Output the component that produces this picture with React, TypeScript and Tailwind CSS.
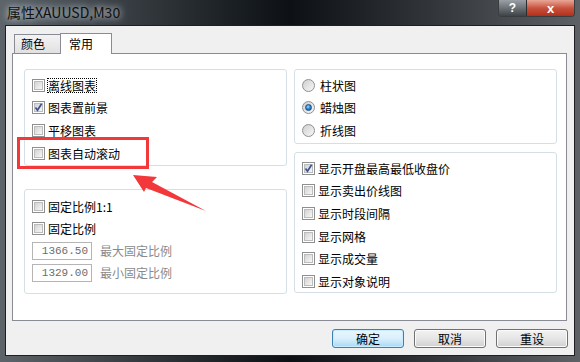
import React from "react";

const font = "font-['Noto_Sans_CJK_SC','Microsoft_YaHei',sans-serif]";

function CheckBox({ checked }: { checked?: boolean }) {
  return (
    <span className="relative block h-[13px] w-[13px] shrink-0 border border-[#8e8f8f] bg-white p-[1px]">
      <span className="block h-full w-full border border-[#bcbcbc] bg-linear-to-br from-[#d3d3d3] to-[#f7f7f7]" />
      {checked && (
        <svg className="absolute left-0 top-0" width="11" height="11" viewBox="0 0 11 11">
          <path d="M2.5 5.5 L4.5 8.3 L8.6 1.8" fill="none" stroke="#3d5391" strokeWidth="1.7" />
        </svg>
      )}
    </span>
  );
}

function Radio({ checked }: { checked?: boolean }) {
  return (
    <span className="flex h-[13px] w-[13px] shrink-0 items-center justify-center rounded-full border border-[#8e8f8f] bg-linear-to-br from-[#cfcfcf] to-[#f8f8f8]">
      {checked && (
        <span className="block h-[7px] w-[7px] rounded-full border border-[#1d4f86] bg-[radial-gradient(circle_at_40%_35%,#9fdcff_0%,#2a8ad8_45%,#0c4a8f_100%)]" />
      )}
    </span>
  );
}

function CheckRow({ label, checked, focus }: { label: string; checked?: boolean; focus?: boolean }) {
  return (
    <div className="flex h-[22.6px] items-center gap-[3px] pl-[7px]">
      <CheckBox checked={checked} />
      <span className={`leading-[13px] ${focus ? "outline-1 outline-dotted outline-black" : ""}`}>{label}</span>
    </div>
  );
}

function RadioRow({ label, checked }: { label: string; checked?: boolean }) {
  return (
    <div className="flex h-[22.6px] items-center gap-[5px] pl-[7px]">
      <Radio checked={checked} />
      <span className="leading-[13px]">{label}</span>
    </div>
  );
}

function Group({ className, children }: { className: string; children: React.ReactNode }) {
  return (
    <div className={`rounded-[3px] border border-[#d5dfe5] bg-white ${className}`}>{children}</div>
  );
}

function NumRow({ value, label }: { value: string; label: string }) {
  return (
    <div className="flex h-[22px] items-center gap-[8px] pl-[7px]">
      <div className="flex h-[18px] w-[60px] items-center justify-end border border-[#b5b5b5] bg-white pr-[3px] font-['Liberation_Mono',monospace] text-[11px] text-[#6d6d6d]">
        {value}
      </div>
      <span className="text-[#8a8a8a]">{label}</span>
    </div>
  );
}

function Btn({ label, primary }: { label: string; primary?: boolean }) {
  return (
    <div
      className={`flex h-[19px] w-[72px] items-center justify-center rounded-[3px] border ${
        primary
          ? "border-[#3c7fb1] bg-linear-to-b from-[#eaf6fd] via-[#d9f0fc] to-[#a7d9f5] shadow-[inset_0_0_0_1px_#c8ecff]"
          : "border-[#707070] bg-linear-to-b from-[#f2f2f2] via-[#e6e6e6] to-[#d0d0d0] shadow-[inset_0_0_0_1px_#fbfbfb]"
      }`}
    >
      {label}
    </div>
  );
}

export default function App() {
  return (
    <div className={`relative flex h-[362px] w-[580px] flex-col overflow-hidden bg-linear-to-r from-[#5d646a] via-[#0d1115] to-[#5e6266] text-[12px] text-black ${font}`}>
      {/* title bar */}
      <div className="flex h-[25px] shrink-0 items-start justify-between">
        <span className="pl-[7px] pt-[3px] text-[14px] leading-[19px] text-[#101010] [text-shadow:0_0_6px_#c9d0d6,0_0_10px_#aab2b9]">
          属性XAUUSD,M30
        </span>
        <div className="mr-[5px] flex h-[17px] overflow-hidden rounded-b-[4px] border border-t-0 border-[#3a3d40]">
          <div className="flex w-[28px] items-center justify-center border-r border-[#2a2c2e] bg-linear-to-b from-[#9aa0a5] via-[#6c7277] to-[#3e4347] font-['Liberation_Sans',sans-serif] text-[12px] font-bold leading-none text-white">
            ?
          </div>
          <div className="flex w-[47px] items-center justify-center bg-linear-to-b from-[#e8a697] via-[#c8523c] to-[#b22f1a] font-['Liberation_Sans',sans-serif] text-[13px] font-bold leading-none text-white">
            x
          </div>
        </div>
      </div>

      {/* client */}
      <div className="mx-[5px] mb-[7px] flex flex-1 flex-col border border-[#1d1f22] bg-[#f0f0f0] pb-[7px]">
        {/* tabs */}
        <div className="flex h-[27px] items-end pl-[8px]">
          <div className="flex h-[19px] w-[47px] items-center border border-b-0 border-[#898c95] bg-linear-to-b from-[#f3f3f3] to-[#e1e1e1] pl-[6px]">
            颜色
          </div>
          <div className="relative z-10 -mb-[1px] -ml-[1px] flex h-[21px] w-[52px] items-center border border-b-0 border-[#898c95] bg-white pl-[8px]">
            常用
          </div>
        </div>

        {/* panel */}
        <div className="ml-[6px] mr-[7px] flex h-[268px] gap-[7px] border border-[#898c95] bg-white pl-[11px] pr-[8px] pt-[15px]">
          <div className="flex w-[263px] flex-col gap-[23px]">
            <Group className="h-[97px] pt-[4px]">
              <CheckRow label="离线图表" focus />
              <CheckRow label="图表置前景" checked />
              <CheckRow label="平移图表" />
              <CheckRow label="图表自动滚动" />
            </Group>
            <Group className="h-[105px] pt-[5px]">
              <CheckRow label="固定比例1:1" />
              <CheckRow label="固定比例" />
              <NumRow value="1366.50" label="最大固定比例" />
              <NumRow value="1329.00" label="最小固定比例" />
            </Group>
          </div>
          <div className="flex w-[263px] flex-col gap-[8px]">
            <Group className="h-[75px] pt-[4px]">
              <RadioRow label="柱状图" />
              <RadioRow label="蜡烛图" checked />
              <RadioRow label="折线图" />
            </Group>
            <Group className="h-[141px] pt-[4px]">
              <CheckRow label="显示开盘最高最低收盘价" checked />
              <CheckRow label="显示卖出价线图" />
              <CheckRow label="显示时段间隔" />
              <CheckRow label="显示网格" />
              <CheckRow label="显示成交量" />
              <CheckRow label="显示对象说明" />
            </Group>
          </div>
        </div>

        {/* buttons */}
        <div className="mt-[8px] flex justify-end gap-[10px] pr-[6px]">
          <Btn label="确定" primary />
          <Btn label="取消" />
          <Btn label="重设" />
        </div>
      </div>

      {/* annotation */}
      <div className="absolute left-[17px] top-[137px] h-[32px] w-[132px] border-[3px] border-[#f2383a]" />
      <svg className="absolute left-0 top-0" width="580" height="362" viewBox="0 0 580 362">
        <polygon points="133,175 157,177 152,182 206,211 146,188 144,192" fill="#f2383a" />
      </svg>
    </div>
  );
}
